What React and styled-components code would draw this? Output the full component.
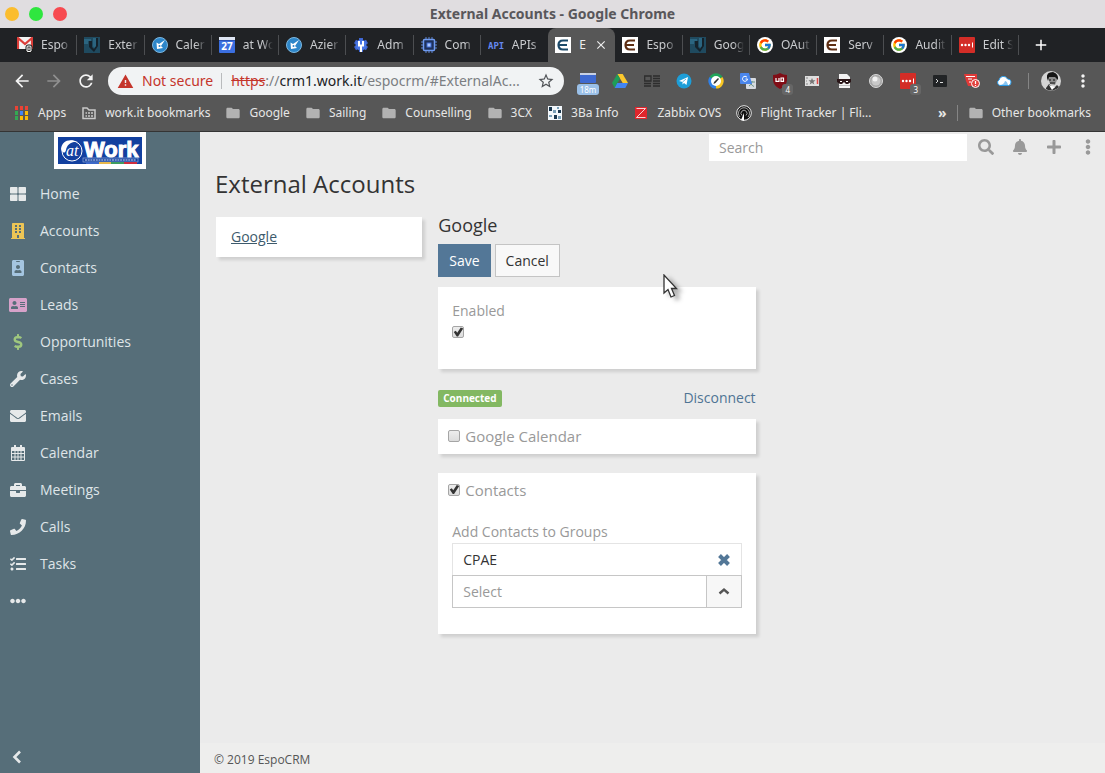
import React from "react";
import styled, { createGlobalStyle, css } from "styled-components";
import * as Fa from "react-icons/fa";
import { FcGoogle } from "react-icons/fc";
import { MdArrowBack, MdArrowForward, MdRefresh, MdStarBorder, MdWarning, MdMoreVert, MdAdd, MdClose, MdFolder } from "react-icons/md";

export default function App() {
  return (
    <Style.Window>
      <Global />
      <TitleBar />
      <TabStrip />
      <Toolbar />
      <Bookmarks />
      <Style.Page>
        <Sidebar />
        <Main />
      </Style.Page>
      <Pointer />
    </Style.Window>
  );
}

const TitleBar = () => (
  <Chrome.Title>
    <Chrome.Lights>
      <Chrome.Light $color="#fbbd2e" aria-label="Minimize" />
      <Chrome.Light $color="#2fe63f" aria-label="Maximize" />
      <Chrome.Light $color="#f74a50" aria-label="Close window" />
    </Chrome.Lights>
    <span>External Accounts - Google Chrome</span>
  </Chrome.Title>
);

const TabStrip = () => (
  <Chrome.Strip>
    <Chrome.Tabs>
      {tabs.map((tab, i) => (
        <Chrome.Tab key={i} $active={tab.active} $line={!tab.active && !tabs[i + 1]?.active}>
          {icons[tab.icon]}
          <Chrome.TabText $active={tab.active}>{tab.text}</Chrome.TabText>
          {tab.active && <MdClose size={14} />}
        </Chrome.Tab>
      ))}
    </Chrome.Tabs>
    <Chrome.NewTab aria-label="New tab">
      <MdAdd size={18} />
    </Chrome.NewTab>
  </Chrome.Strip>
);

const Toolbar = () => (
  <Chrome.Toolbar>
    <Chrome.Nav aria-label="Back"><MdArrowBack size={20} /></Chrome.Nav>
    <Chrome.Nav aria-label="Forward" $dim><MdArrowForward size={20} /></Chrome.Nav>
    <Chrome.Nav aria-label="Reload"><MdRefresh size={20} /></Chrome.Nav>
    <Chrome.Omnibox>
      <MdWarning size={17} color="#c5352b" />
      <Chrome.Insecure>Not secure</Chrome.Insecure>
      <Chrome.Url>
        <s>https</s>://<b>crm1.work.it</b>/espocrm/#ExternalAc...
      </Chrome.Url>
      <MdStarBorder size={18} color="#505357" />
    </Chrome.Omnibox>
    <Chrome.Extensions>
      {extensions.map((name) => (
        <Chrome.Extension key={name} aria-label={name}>
          {icons[name]}
          {badges[name] && <Chrome.Badge $wide={name === "timer"}>{badges[name]}</Chrome.Badge>}
        </Chrome.Extension>
      ))}
    </Chrome.Extensions>
    <Chrome.Line />
    <Chrome.Profile aria-label="Profile">{icons.avatar}</Chrome.Profile>
    <Chrome.Nav aria-label="Menu"><MdMoreVert size={20} /></Chrome.Nav>
  </Chrome.Toolbar>
);

const Bookmarks = () => (
  <Chrome.Bookmarks>
    {bookmarks.map((item) => (
      <Chrome.Bookmark key={item.text} href="#">
        {icons[item.icon]}
        {item.text}
      </Chrome.Bookmark>
    ))}
    <Chrome.Overflow>
      <Chrome.More aria-label="More bookmarks">»</Chrome.More>
      <Chrome.Line />
      <Chrome.Bookmark href="#">
        {icons.folder}
        Other bookmarks
      </Chrome.Bookmark>
    </Chrome.Overflow>
  </Chrome.Bookmarks>
);

const CalendarIcon = () => (
  <svg width="14" height="16" viewBox="0 0 14 16">
    <path
      fill="currentColor"
      fillRule="evenodd"
      d="M1 2H3V0H5V2H9V0H11V2H13Q14 2 14 3V15Q14 16 13 16H1Q0 16 0 15V3Q0 2 1 2ZM1 6V8H3.500V6ZM4.500 6V8H6.500V6ZM7.500 6V8H9.500V6ZM10.500 6V8H13V6ZM1 9V11.500H3.500V9ZM4.500 9V11.500H6.500V9ZM7.500 9V11.500H9.500V9ZM10.500 9V11.500H13V9ZM1 12.500V15H3.500V12.500ZM4.500 12.500V15H6.500V12.500ZM7.500 12.500V15H9.500V12.500ZM10.500 12.500V15H13V12.500Z"
    />
  </svg>
);

const Sidebar = () => (
  <Side.Wrapper>
    <Side.Logo href="#" aria-label="at Work">
      <svg width="84" height="27" viewBox="0 0 84 27">
        <rect width="84" height="27" fill="#12409f" />
        <circle cx="14" cy="14" r="10" fill="none" stroke="#fff" />
        <path d="M3 12C4 4 11 1 20 5C13 4 9 8 8 13C7 17 4 16 3 12Z" fill="#fff" />
        <text x="8" y="19" fontFamily="Liberation Serif, serif" fontStyle="italic" fontSize="16" fill="#fff">at</text>
        <text x="26" y="20" fontFamily="Liberation Sans, sans-serif" fontWeight="bold" fontSize="22" fill="#fff" stroke="#fff">Work</text>
        <rect x="25" y="21" width="55" height="4" fill="#12409f" stroke="#a8bce4" strokeWidth=".6" />
        <path d="M27 23H78" stroke="#d4def4" strokeWidth="1.2" strokeDasharray="2 .7" />
        <path d="M28 26H41" stroke="#3c68c8" strokeWidth="2" />
        <path d="M41 26H53" stroke="#e8b84c" strokeWidth="2" />
        <path d="M53 26H66" stroke="#3e9c60" strokeWidth="2" />
        <path d="M66 26H79" stroke="#cf2d3c" strokeWidth="2" />
      </svg>
    </Side.Logo>
    <Side.List>
      {menu.map(({ text, Icon, color, size }) => (
        <Side.Item key={text} href="#">
          <Side.Icon $color={color}>
            <Icon size={size || 16} />
          </Side.Icon>
          {text}
        </Side.Item>
      ))}
      <Side.Item href="#" aria-label="More">
        <Side.Icon><Fa.FaEllipsisH size={16} /></Side.Icon>
      </Side.Item>
    </Side.List>
    <Side.Collapse aria-label="Collapse menu">
      <svg width="14" height="14" viewBox="0 0 14 14">
        <path d="M10 1.500L4.500 7L10 12.500" fill="none" stroke="currentColor" strokeWidth="2.600" />
      </svg>
    </Side.Collapse>
  </Side.Wrapper>
);

const Main = () => (
  <Content.Wrapper>
    <Content.Header>
      <Content.Search type="text" placeholder="Search" aria-label="Search" />
      <Content.HeaderButton aria-label="Run search"><Fa.FaSearch size={16} /></Content.HeaderButton>
      <Content.HeaderButton aria-label="Notifications"><Fa.FaBell size={16} /></Content.HeaderButton>
      <Content.HeaderButton aria-label="Create"><Fa.FaPlus size={16} /></Content.HeaderButton>
      <Content.HeaderButton aria-label="Menu"><Fa.FaEllipsisV size={16} /></Content.HeaderButton>
    </Content.Header>
    <Content.Heading>External Accounts</Content.Heading>
    <Content.Grid>
      <Content.Accounts>
        <a href="#google">Google</a>
      </Content.Accounts>
      <Content.Detail>
        <Content.Form>
          <Content.SubHeading>Google</Content.SubHeading>
          <Content.Buttons>
            <Content.Button $primary>Save</Content.Button>
            <Content.Button>Cancel</Content.Button>
          </Content.Buttons>
          <Content.EnabledPanel>
            <Content.Label htmlFor="enabled">Enabled</Content.Label>
            <Content.Check id="enabled" type="checkbox" defaultChecked />
          </Content.EnabledPanel>
          <Content.Status>
            <Content.Tag>Connected</Content.Tag>
            <a href="#disconnect">Disconnect</a>
          </Content.Status>
          <Content.Panel>
            <Content.Product>
              <Content.Check type="checkbox" />
              Google Calendar
            </Content.Product>
          </Content.Panel>
          <Content.Panel>
            <Content.Product>
              <Content.Check type="checkbox" defaultChecked />
              Contacts
            </Content.Product>
            <Content.Groups>
              <Content.Label htmlFor="groups">Add Contacts to Groups</Content.Label>
              <Content.Group>
                CPAE
                <Content.Remove aria-label="Remove CPAE">
                  <svg width="14" height="14" viewBox="0 0 14 14">
                    <path d="M2.500 2.500L11.500 11.500M11.500 2.500L2.500 11.500" stroke="currentColor" strokeWidth="4" />
                  </svg>
                </Content.Remove>
              </Content.Group>
              <Content.Picker>
                <input id="groups" type="text" placeholder="Select" />
                <button aria-label="Choose groups">
                  <svg width="12" height="12" viewBox="0 0 12 12">
                    <path d="M1.500 7.500L6 3.500L10.500 7.500" fill="none" stroke="currentColor" strokeWidth="2.400" />
                  </svg>
                </button>
              </Content.Picker>
            </Content.Groups>
          </Content.Panel>
        </Content.Form>
      </Content.Detail>
    </Content.Grid>
    <Content.Footer>© 2019 EspoCRM</Content.Footer>
  </Content.Wrapper>
);

const Pointer = () => (
  <Style.Pointer width="24" height="30" viewBox="0 0 24 30">
    <path d="M1 1V19L5 15.500L8 23L11.500 21.500L8.500 14.500H13.500Z" fill="#fff" stroke="#333" strokeWidth="1.300" />
  </Style.Pointer>
);

const EspoLogo = ({ color }) => (
  <svg width="16" height="16" viewBox="0 0 16 16">
    <rect width="16" height="16" fill="#fff" />
    <path d="M13 3.500H8Q3.500 3.500 3.500 8T8 12.500H13M4 8H12" fill="none" stroke={color} strokeWidth="2.200" />
  </svg>
);

const BlueDisc = () => (
  <svg width="16" height="16" viewBox="0 0 16 16">
    <circle cx="8" cy="8" r="7.500" fill="#2d86c9" stroke="#7db7df" />
    <path d="M13 3L7 7L4.500 5.500L5 12L11 11L9 9L13 3Z" fill="#fff" />
    <circle cx="7.500" cy="9" r="1" fill="#2d86c9" />
  </svg>
);

const TealMark = () => (
  <svg width="16" height="16" viewBox="0 0 16 16">
    <rect width="16" height="16" fill="#1f4a5f" />
    <path d="M0 2H7V4H4V7H0Z" fill="#2b6580" />
    <path d="M5 4H8V10L10 12L12 9V1H14V9L10 15L5 10Z" fill="#15222b" />
    <path d="M9 1H12V9L10 11L9 9Z" fill="#2b6580" />
  </svg>
);

const GoogleDisc = () => (
  <svg width="16" height="16" viewBox="0 0 16 16">
    <circle cx="8" cy="8" r="8" fill="#fff" />
    <FcGoogle x="1" y="1" size={14} />
  </svg>
);

const RedDots = () => (
  <svg width="16" height="16" viewBox="0 0 16 16">
    <rect width="16" height="16" rx="1" fill="#d32d27" />
    <circle cx="3" cy="8" r="1.200" fill="#fff" />
    <circle cx="6.500" cy="8" r="1.200" fill="#fff" />
    <circle cx="10" cy="8" r="1.200" fill="#fff" />
    <path d="M13.500 5.500V10.500" stroke="#fff" />
  </svg>
);

const icons = {
  gmail: (
    <svg width="16" height="16" viewBox="0 0 16 16">
      <rect width="16" height="12" rx="1" fill="#f4f4f4" />
      <path d="M1 12V1L8 7L15 1V12" fill="none" stroke="#dc3e39" strokeWidth="2.200" />
      <rect x="9" y="8" width="6" height="7.500" rx="2" fill="#fff" stroke="#111" />
      <rect x="11" y="10" width="2" height="3.500" fill="none" stroke="#111" strokeWidth=".8" />
    </svg>
  ),
  teal: <TealMark />,
  disc: <BlueDisc />,
  day: (
    <svg width="16" height="16" viewBox="0 0 16 16">
      <rect width="16" height="16" rx="1" fill="#3b6fe0" />
      <rect width="16" height="3" fill="#dfe6f4" />
      <path d="M0 3.500H16" stroke="#2a52b5" />
      <text x="8" y="13" textAnchor="middle" fontFamily="Noto Sans, sans-serif" fontWeight="bold" fontSize="10" fill="#fff">27</text>
    </svg>
  ),
  admin: (
    <svg width="16" height="16" viewBox="0 0 16 16">
      <path d="M8 1V15M2 4.500L14 11.500M2 11.500L14 4.500" stroke="#3f66d4" strokeWidth="4" />
      <circle cx="8" cy="8" r="5.500" fill="#4775e4" />
      <path d="M6 4V8.500H10V4M8 8V15" fill="none" stroke="#fff" strokeWidth="2" />
    </svg>
  ),
  chip: (
    <svg width="16" height="16" viewBox="0 0 16 16">
      <path d="M5 0V16M8 0V16M11 0V16M0 5H16M0 8H16M0 11H16" stroke="#5c85d6" />
      <rect x="2.500" y="2.500" width="11" height="11" rx="1" fill="#1f3158" stroke="#6f9bf0" strokeWidth="1.500" />
      <rect x="6" y="6" width="4" height="4" fill="#a9c6ff" stroke="#3c6ad4" />
    </svg>
  ),
  api: (
    <svg width="16" height="16" viewBox="0 0 16 16">
      <text x="0" y="12" fontFamily="DejaVu Sans Mono, monospace" fontWeight="bold" fontSize="9" fill="#6487ee">API</text>
    </svg>
  ),
  espoBlue: <EspoLogo color="#1d4a69" />,
  espoBrown: <EspoLogo color="#5e2f14" />,
  google: <GoogleDisc />,
  red: <RedDots />,

  apps: (
    <svg width="16" height="16" viewBox="0 0 16 16">
      {["#ea4335", "#ea4335", "#ea4335", "#34a853", "#4285f4", "#fbbc05", "#34a853", "#fbbc05", "#fbbc05"].map((fill, i) => (
        <rect key={i} x={1 + (i % 3) * 5} y={1 + Math.floor(i / 3) * 5} width="3" height="4" fill={fill} />
      ))}
    </svg>
  ),
  folder: <MdFolder size={16} color="#b2b2b2" />,
  managed: (
    <svg width="16" height="16" viewBox="0 0 16 16">
      <path d="M2 3H6L8 5H14V13.500H2Z" fill="none" stroke="#c9c9c9" strokeWidth="1.500" />
      <path d="M4.500 8H6M7 8H9M10 8H12M4.500 11H6M7 11H9M10 11H12" stroke="#c9c9c9" strokeWidth="1.500" />
    </svg>
  ),
  mosaic: (
    <svg width="16" height="16" viewBox="0 0 16 16">
      <rect x="1" y="1" width="14" height="14" fill="#f2f7fb" />
      <path d="M2 2H5V6H2ZM11 5H14V8H11ZM7 10H10V14H7Z" fill="#18364e" />
      <path d="M6 5H9V8H6ZM10 2H12V4H10ZM2 10H5V12H2ZM11 11H14V14H11Z" fill="#789fb8" />
    </svg>
  ),
  zabbix: (
    <svg width="16" height="16" viewBox="0 0 16 16">
      <rect x="2" y="2" width="12" height="12" fill="#e0252c" />
      <path d="M3.500 3.500H12.500L3.500 12.500H12.500" fill="none" stroke="#fff" strokeWidth=".8" />
    </svg>
  ),
  radar: (
    <svg width="16" height="16" viewBox="0 0 16 16">
      <circle cx="8" cy="8" r="7.300" fill="#111" stroke="#eee" />
      <path d="M4 12A5.500 5.500 0 1 1 12 12M6 10.500A3 3 0 1 1 10 10.500" fill="none" stroke="#aaa" />
      <path d="M8 8L5 15L8 16Z" fill="#fff" />
    </svg>
  ),

  timer: (
    <svg width="16" height="16" viewBox="0 0 16 16">
      <rect y="0" width="16" height="10" rx="1" fill="#3f6ad0" />
      <rect y="0" width="16" height="2" fill="#c8d1e4" />
    </svg>
  ),
  drive: (
    <svg width="16" height="16" viewBox="0 0 16 16">
      <path d="M5.300 1H10.700L16 10H10.700Z" fill="#fbc82d" />
      <path d="M5.300 1L8 5.500L2.700 15L0 10Z" fill="#1f9d58" />
      <path d="M5.300 10H16L13.300 15H2.700Z" fill="#4285f4" />
    </svg>
  ),
  news: (
    <svg width="16" height="16" viewBox="0 0 16 16">
      <path d="M.7 3H7V8H.7ZM9 3H16M9 5.500H16M9 8H16M0 10.500H7M9 10.500H16M0 13H7M9 13H16" fill="none" stroke="#2d2d2d" strokeWidth="1.300" />
    </svg>
  ),
  telegram: (
    <svg width="16" height="16" viewBox="0 0 16 16">
      <circle cx="8" cy="8" r="7.500" fill="#1d9ed8" />
      <path d="M3 8L12 4L10.500 12L8 10L6.500 11.500V9Z" fill="#fff" />
      <path d="M6.500 9L10 6" stroke="#1d9ed8" strokeWidth=".7" />
    </svg>
  ),
  pencil: (
    <svg width="16" height="16" viewBox="0 0 16 16">
      <path d="M8 8L1.500 4A7.600 7.600 0 0 1 14.500 4Z" fill="#20a35a" />
      <path d="M8 8L1.500 4A7.600 7.600 0 0 0 8 15.600Z" fill="#2f80e8" />
      <path d="M8 8L14.500 4A7.600 7.600 0 0 1 8 15.600Z" fill="#f8c623" />
      <circle cx="8" cy="8" r="5" fill="#fff" />
      <path d="M5.500 11L6 9L10 5L11 6L7.500 10Z" fill="#333" />
    </svg>
  ),
  translate: (
    <svg width="16" height="16" viewBox="0 0 16 16">
      <rect x="6" y="5" width="10" height="11" rx="1" fill="#d7dbe0" />
      <path d="M9 9H15M12 8V9Q11 12 9 13M10.500 10Q12 13 14 13.500" fill="none" stroke="#6b9487" />
      <path d="M1 0H9L12 11H1Q0 11 0 10V1Q0 0 1 0Z" fill="#4a86ec" />
      <path d="M7 4.300A2.500 2.500 0 1 0 7.500 6H5.500" fill="none" stroke="#fff" />
    </svg>
  ),
  shield: (
    <svg width="16" height="16" viewBox="0 0 16 16">
      <path d="M8 0Q11 2 15 2V7Q14.500 13 8 16Q1.500 13 1 7V2Q5 2 8 0Z" fill="#800d16" />
      <path d="M4 5V8.300H7V5M9 5H11.500V8.300H9Z" fill="none" stroke="#fff" strokeWidth="1.200" />
    </svg>
  ),
  ticket: (
    <svg width="16" height="16" viewBox="0 0 16 16">
      <rect x="1" y="3" width="14" height="10" fill="#dedede" />
      <path d="M8 5L9 7.300H11.500L9.500 9L10.300 11.500L8 10L5.700 11.500L6.500 9L4.500 7.300H7Z" fill="#777" />
      <path d="M2 5H4M2 8H3M2 11H4" stroke="#888" />
      <path d="M13.500 5V11" stroke="#df4746" strokeWidth="1.500" />
    </svg>
  ),
  bandit: (
    <svg width="16" height="16" viewBox="0 0 16 16">
      <path d="M3 1H11L14 4V15H3Z" fill="#f2f2f2" />
      <path d="M1 6H15V9L12 11H10L8 9L6 11H4L1 9Z" fill="#2a1618" />
      <path d="M4 8.500H6M10 8.500H12" stroke="#fff" />
      <path d="M3 12.500H14" stroke="#bdbdbd" />
    </svg>
  ),
  orb: (
    <svg width="16" height="16" viewBox="0 0 16 16">
      <circle cx="8" cy="8" r="6.500" fill="#a6a6a6" stroke="#d9d9d9" />
      <circle cx="8" cy="8" r="4.500" fill="#c8c8c8" />
      <circle cx="7" cy="6" r="2.500" fill="#f2f2f2" />
    </svg>
  ),
  lastpass: <RedDots />,
  terminal: (
    <svg width="16" height="16" viewBox="0 0 16 16">
      <rect x="1" y="2" width="14" height="12" rx="1" fill="#222426" />
      <path d="M4 6L6 8L4 10M8 9.500H11" fill="none" stroke="#ddd" />
    </svg>
  ),
  alert: (
    <svg width="16" height="16" viewBox="0 0 16 16">
      <path d="M0 1H13V10L10 13H4L2 8Z" fill="#e03a38" />
      <path d="M2 3.500H11M4 6H8M5 9H7" stroke="#fff" />
      <circle cx="11.500" cy="10.500" r="4" fill="#e2433f" stroke="#fff" />
      <path d="M11.500 8V11M11.500 12V13" stroke="#fff" strokeWidth="1.200" />
    </svg>
  ),
  cloud: (
    <svg width="16" height="16" viewBox="0 0 16 16">
      <path d="M4 12.500A3 3 0 0 1 3 7A4.500 4.500 0 0 1 11.500 6A3.300 3.300 0 0 1 12.500 12.500Z" fill="#fff" stroke="#2b9be8" />
      <path d="M3 12Q8 12 9 8Q11 8 12 12Z" fill="#8ac6f2" />
    </svg>
  ),
  avatar: (
    <svg width="20" height="20" viewBox="0 0 20 20">
      <circle cx="10" cy="10" r="10" fill="#d5d5d5" />
      <path d="M7 7Q7 3 12 3Q17 4 16 9L14 14L9 13Z" fill="#8c8c8c" />
      <path d="M6 7Q5 1 12 1Q18 3 17 9L14 6L8 6L7 10Z" fill="#161616" />
      <path d="M8 9H10M12 9H14M9 12H14" stroke="#111" />
      <path d="M5 17L8 13L13 17L16 14L18 16A10 10 0 0 1 5 18Z" fill="#333" />
      <path d="M8 14L11 19L14 16Z" fill="#fff" />
    </svg>
  ),
};

const extensions = ["timer", "drive", "news", "telegram", "pencil", "translate", "shield", "ticket", "bandit", "orb", "lastpass", "terminal", "alert", "cloud"];

const badges = { timer: "18m", shield: "4", lastpass: "3" };

const tabs = [
  { text: "Espo", icon: "gmail" },
  { text: "Exter", icon: "teal" },
  { text: "Caler", icon: "disc" },
  { text: "at Wo", icon: "day" },
  { text: "Azier", icon: "disc" },
  { text: "Adm", icon: "admin" },
  { text: "Com", icon: "chip" },
  { text: "APIs", icon: "api" },
  { text: "E", icon: "espoBlue", active: true },
  { text: "Espo", icon: "espoBrown" },
  { text: "Goog", icon: "teal" },
  { text: "OAut", icon: "google" },
  { text: "Serv", icon: "espoBrown" },
  { text: "Audit", icon: "google" },
  { text: "Edit S", icon: "red" },
];

const bookmarks = [
  { text: "Apps", icon: "apps" },
  { text: "work.it bookmarks", icon: "managed" },
  { text: "Google", icon: "folder" },
  { text: "Sailing", icon: "folder" },
  { text: "Counselling", icon: "folder" },
  { text: "3CX", icon: "folder" },
  { text: "3Ba Info", icon: "mosaic" },
  { text: "Zabbix OVS", icon: "zabbix" },
  { text: "Flight Tracker | Fli...", icon: "radar" },
];

const menu = [
  { text: "Home", Icon: Fa.FaThLarge },
  { text: "Accounts", Icon: Fa.FaBuilding, color: "#edc555" },
  { text: "Contacts", Icon: Fa.FaIdBadge, color: "#a4c5e0" },
  { text: "Leads", Icon: Fa.FaAddressCard, color: "#d6a2c9", size: 18 },
  { text: "Opportunities", Icon: Fa.FaDollarSign, color: "#9fc77e" },
  { text: "Cases", Icon: Fa.FaWrench },
  { text: "Emails", Icon: Fa.FaEnvelope },
  { text: "Calendar", Icon: CalendarIcon },
  { text: "Meetings", Icon: Fa.FaBriefcase },
  { text: "Calls", Icon: Fa.FaPhone },
  { text: "Tasks", Icon: Fa.FaTasks },
];

const Global = createGlobalStyle`
  *, *::before, *::after {
    box-sizing: border-box;
  }

  body {
    margin: 0;
    font: 14px/20px "Open Sans", sans-serif;
    color: #333;
  }

  button {
    margin: 0;
    padding: 0;
    border: 0;
    background: none;
    font: inherit;
    color: inherit;
  }

  a {
    color: #4f7494;
    text-decoration: none;
  }

  svg {
    display: block;
    flex: none;
  }
`;

const Style = {
  Window: styled.div`
    display: flex;
    flex-direction: column;
    min-height: 100vh;
  `,
  Page: styled.div`
    display: flex;
    flex: 1;
  `,
  Pointer: styled.svg`
    position: absolute;
    left: 663px;
    top: 274px;
    filter: drop-shadow(5px 3px 2px rgba(0, 0, 0, 0.3));
  `,
};

const Chrome = {
  Title: styled.header`
    display: grid;
    grid-template-columns: 1fr auto 1fr;
    align-items: center;
    height: 28px;
    padding: 0 5px;
    background: #e0dde0;
    color: #59575b;
    font: bold 14px/20px "Noto Sans", sans-serif;
  `,
  Lights: styled.div`
    display: flex;
    gap: 10px;
  `,
  Light: styled.button`
    width: 14px;
    height: 14px;
    border-radius: 50%;
    background: ${(p) => p.$color};
  `,
  Strip: styled.div`
    display: flex;
    height: 34px;
    padding-left: 10px;
    background: #202225;
    color: #c9cbce;
    font: 12px/18px "Noto Sans", sans-serif;
  `,
  Tabs: styled.div`
    display: flex;
    flex: 1;
    min-width: 0;
  `,
  Tab: styled.div`
    display: flex;
    flex: 1 1 0;
    align-items: center;
    gap: 8px;
    min-width: 0;
    padding: 0 6px 0 7px;
    ${(p) => p.$line && css`
      background: linear-gradient(#4c4e51, #4c4e51) right center / 1px 20px no-repeat;
    `}
    ${(p) => p.$active && css`
      border-radius: 8px 8px 0 0;
      background: #575757;
      color: #eee;
    `}
  `,
  TabText: styled.span`
    flex: ${(p) => (p.$active ? "none" : 1)};
    overflow: hidden;
    white-space: nowrap;
    ${(p) => !p.$active && css`
      mask-image: linear-gradient(to right, #000 65%, transparent);
    `}
  `,
  NewTab: styled.button`
    display: grid;
    place-items: center;
    width: 44px;
    margin-right: 42px;
    color: #fff;
  `,
  Toolbar: styled.div`
    display: flex;
    align-items: center;
    height: 38px;
    padding: 0 12px;
    background: #575757;
    font: 14px/20px "Noto Sans", sans-serif;
  `,
  Nav: styled.button`
    margin-right: 12px;
    color: ${(p) => (p.$dim ? "#909090" : "#f4f4f4")};

    &:last-child {
      margin: 0 0 0 12px;
    }
  `,
  Omnibox: styled.div`
    display: flex;
    flex: 1;
    align-items: center;
    min-width: 0;
    height: 28px;
    padding: 0 9px;
    border-radius: 14px;
    background: #f1f3f4;
  `,
  Insecure: styled.span`
    margin: 0 9px 0 8px;
    padding-right: 9px;
    background: linear-gradient(#b9bbbd, #b9bbbd) right center / 1px 16px no-repeat;
    white-space: nowrap;
    color: #c5352b;
  `,
  Url: styled.span`
    flex: 1;
    overflow: hidden;
    white-space: nowrap;
    color: #7b7e82;

    s {
      color: #c5352b;
    }

    b {
      font-weight: normal;
      color: #202124;
    }
  `,
  Extensions: styled.div`
    display: flex;
    gap: 16px;
    margin: 0 16px;
  `,
  Extension: styled.button`
    position: relative;
    width: 16px;
    height: 16px;
  `,
  Badge: styled.span`
    position: absolute;
    right: -5px;
    bottom: -6px;
    padding: 0 3px;
    border-radius: 3px;
    background: #666;
    color: #fff;
    font-size: 8px;
    line-height: 11px;
    ${(p) => p.$wide && css`
      right: -3px;
      width: 22px;
      padding: 0;
      background: #9ac0e8;
      text-align: center;
    `}
  `,
  Line: styled.span`
    width: 1px;
    height: 16px;
    background: #858585;
  `,
  Profile: styled.button`
    margin: 0 0 0 12px;
  `,
  Bookmarks: styled.nav`
    display: flex;
    align-items: center;
    gap: 15px;
    height: 32px;
    padding: 0 14px 6px;
    border-bottom: 1px solid #343434;
    background: #575757;
    color: #e6e6e6;
    font: 12px/18px "Noto Sans", sans-serif;
  `,
  Bookmark: styled.a`
    display: flex;
    align-items: center;
    gap: 8px;
    white-space: nowrap;
    color: inherit;
  `,
  Overflow: styled.div`
    display: flex;
    align-items: center;
    gap: 10px;
    margin-left: auto;
  `,
  More: styled.button`
    font-size: 14px;
    font-weight: bold;
  `,
};

const Side = {
  Wrapper: styled.nav`
    display: flex;
    flex: none;
    flex-direction: column;
    width: 200px;
    background: #566e79;
  `,
  Logo: styled.a`
    align-self: center;
    padding: 5px 4px;
    background: #fff;
  `,
  List: styled.div`
    flex: 1;
    padding-top: 6px;
  `,
  Item: styled.a`
    display: flex;
    align-items: center;
    gap: 12px;
    height: 37px;
    padding-left: 8px;
    color: #dfe5e8;
  `,
  Icon: styled.span`
    display: flex;
    justify-content: center;
    width: 20px;
    color: ${(p) => p.$color || "#e6e9ea"};
  `,
  Collapse: styled.button`
    align-self: flex-start;
    padding: 9px 10px;
    color: #e6e9ea;
  `,
};

const Content = {
  Wrapper: styled.main`
    display: flex;
    flex: 1;
    flex-direction: column;
    min-width: 0;
    background: #ebebeb;
  `,
  Header: styled.div`
    display: flex;
    justify-content: flex-end;
    padding: 2px 0 0;
  `,
  Search: styled.input`
    width: 258px;
    height: 27px;
    margin-right: 2px;
    padding: 0 10px;
    border: 0;
    background: #fff;
    font: inherit;

    &::placeholder {
      color: #999;
    }
  `,
  HeaderButton: styled.button`
    display: grid;
    place-items: center;
    width: 34px;
    height: 26px;
    color: #999;
  `,
  Heading: styled.h1`
    margin: 8px 15px 17px;
    font-size: 24px;
    font-weight: normal;
    line-height: 30px;
  `,
  Grid: styled.div`
    display: grid;
    grid-template-columns: repeat(12, 1fr);
    flex: 1;
    align-items: start;
    gap: 16px;
    padding: 0 16px;
  `,
  Accounts: styled.div`
    grid-column: span 3;
    padding: 10px 15px;
    margin-top: 1px;
    background: #fff;
    box-shadow: 3px 3px 3px rgba(0, 0, 0, 0.12);

    a {
      color: #3d5a6c;
      text-decoration: underline;
    }
  `,
  Detail: styled.div`
    display: grid;
    grid-column: span 9;
    grid-template-columns: 1fr 1fr;
    gap: 16px;
  `,
  Form: styled.div`
    min-width: 0;
  `,
  SubHeading: styled.h2`
    margin: 0 0 10px;
    font-size: 18px;
    font-weight: normal;
    line-height: 18px;
  `,
  Buttons: styled.div`
    display: flex;
    gap: 4px;
    margin-bottom: 10px;
  `,
  Button: styled.button`
    height: 33px;
    padding: 0 10px;
    border: 1px solid ${(p) => (p.$primary ? "#537797" : "#c4c4c4")};
    background: ${(p) => (p.$primary ? "#537797" : "#f8f8f8")};
    color: ${(p) => (p.$primary ? "#fff" : "#333")};
  `,
  Panel: styled.section`
    margin-bottom: 19px;
    background: #fff;
    box-shadow: 3px 3px 3px rgba(0, 0, 0, 0.12);
  `,
  Label: styled.label`
    display: block;
    color: #999;
  `,
  Check: styled.input`
    position: relative;
    flex: none;
    width: 12px;
    height: 12px;
    margin: 0;
    border: 1px solid #a5a5a5;
    border-radius: 2px;
    background: linear-gradient(#ededed, #dcdcdc);
    appearance: none;

    &:checked::after {
      content: "";
      position: absolute;
      inset: 0;
      background: #333;
      clip-path: polygon(5% 50%, 25% 38%, 40% 58%, 75% 5%, 100% 15%, 48% 95%, 35% 95%);
    }
  `,
  Status: styled.div`
    display: flex;
    align-items: center;
    justify-content: space-between;
    margin: 19px 0 11px;
  `,
  Tag: styled.span`
    padding: 0 5px;
    border-radius: 2px;
    background: #83b862;
    color: #fff;
    font-size: 10px;
    font-weight: bold;
    line-height: 17px;
  `,
  Product: styled.label`
    display: flex;
    align-items: center;
    gap: 5px;
    height: 35px;
    padding: 0 10px 2px;
    color: #999;
    font-size: 15px;
  `,
  Groups: styled.div`
    padding: 14px 14px 26px;
  `,
  Group: styled.div`
    display: flex;
    align-items: center;
    justify-content: space-between;
    height: 32px;
    margin-top: 1px;
    padding: 0 10px;
    border: 1px solid #e4e4e4;
    border-bottom: 0;
  `,
  Remove: styled.button`
    color: #537797;
  `,
  Picker: styled.div`
    display: flex;
    height: 33px;
    border: 1px solid #c6c6c6;

    input {
      flex: 1;
      min-width: 0;
      padding: 0 10px;
      border: 0;
      font: inherit;
    }

    input::placeholder {
      color: #999;
    }

    button {
      display: grid;
      place-items: center;
      width: 35px;
      border-left: 1px solid #c6c6c6;
      background: #f7f7f7;
      color: #555;
    }
  `,
  Footer: styled.footer`
    padding: 7px 14px 3px;
    background: #eeeeed;
    color: #555;
    font-size: 12px;
  `,
};

Content.EnabledPanel = styled(Content.Panel)`
  padding: 14px 14px 31px;

  ${Content.Check} {
    display: block;
    margin-top: 5px;
  }
`;
